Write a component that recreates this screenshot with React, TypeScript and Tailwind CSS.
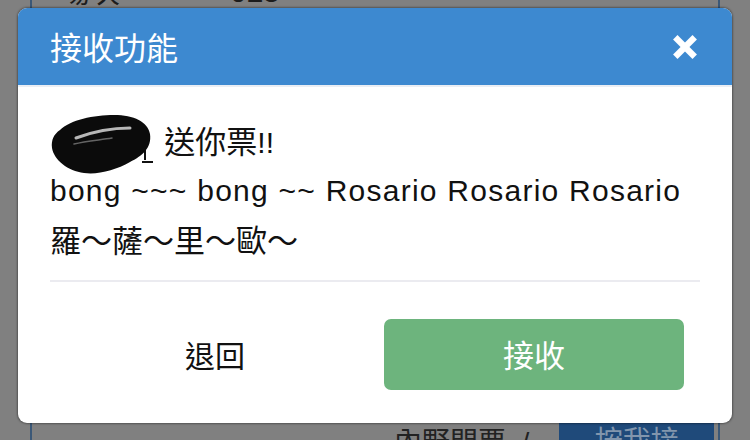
import { X } from 'lucide-react';

const latin = "font-['Liberation_Sans','Noto_Sans_CJK_TC',sans-serif]";

function Scribble() {
  // redacted name, drawn as a marker blob
  return (
    <svg width="108" height="62" viewBox="0 0 108 62" className="inline-block align-middle -my-[14px] -mr-[2px]">
      <path d="M92 48 H103" stroke="#111" strokeWidth="2" />
      <path d="M95 34 V46" stroke="#111" strokeWidth="2" />
      <path
        d="M10 16 C20 6 44 1 64 1 C84 1 98 8 100 20 C102 34 92 42 80 48 C66 56 48 61 34 59 C18 57 4 46 2 34 C1 26 4 20 10 16 Z"
        fill="#0b0b0b"
      />
      <path d="M26 24 C42 18 62 14 80 14" stroke="#f2f2f2" strokeWidth="3" fill="none" strokeLinecap="round" opacity="0.75" />
      <path d="M24 30 C36 27 50 26 62 24" stroke="#bdbdbd" strokeWidth="1.5" fill="none" strokeLinecap="round" opacity="0.5" />
    </svg>
  );
}

export default function App() {
  return (
    <div className={`relative w-[750px] h-[440px] overflow-hidden bg-[#808080] ${latin}`}>
      {/* page behind the modal */}
      <div className="mx-[30px] w-[690px] h-full flex flex-col justify-between border-x-2 border-[#3b5877]">
        <div className="flex items-end gap-[110px] pl-[28px] -mt-[24px] text-[30px] leading-[32px] text-[#1c1c1c]">
          <span>場次</span>
          <span>025</span>
        </div>
        <div className="flex items-start -mb-[24px]">
          <span className="ml-[362px] mt-[4px] text-[28px] leading-[34px] text-[#222]">內野門票 &nbsp;/</span>
          <div className="ml-[30px] w-[155px] h-[42px] bg-[#1f4a7a] flex justify-center pt-[3px] text-[28px] leading-[34px] text-[#8296ad]">
            按我接
          </div>
        </div>
      </div>

      {/* modal */}
      <div className="absolute left-[18px] top-[8px] w-[714px] h-[415px] bg-white rounded-[9px] overflow-hidden shadow-[0_0_2px_1px_rgba(0,0,0,0.35)] flex flex-col">
        <div className="h-[79px] shrink-0 bg-[#3d89d0] flex items-center justify-between pl-[32px] pr-[35px] border-b-[2px] border-[#eaeef4]">
          <h2 className="text-[32px] leading-none text-white font-['Noto_Sans_CJK_TC',sans-serif] pb-[2px]">接收功能</h2>
          <X className="w-[30px] h-[30px] text-white -mr-[3px]" strokeWidth={5} strokeLinecap="square" />
        </div>

        <div className="px-[32px] pt-[29px] text-[30px] leading-[48px] text-[#111]">
          <p>
            <Scribble /> <span className="font-['Noto_Sans_CJK_TC',sans-serif] text-[31px]">送你票</span>!!
          </p>
          <p className="tracking-[1.25px]">bong ~~~ bong ~~ Rosario Rosario Rosario</p>
          <p className="font-['Noto_Sans_CJK_TC',sans-serif] text-[31px]">羅～薩～里～歐～</p>
          <div className="mt-[17px] h-[2px] bg-[#ebebf0]" />
        </div>

        <div className="flex items-center px-[32px] pt-[37px]">
          <button className="w-[330px] h-[71px] text-[30px] text-[#111] font-['Noto_Sans_CJK_TC',sans-serif]">退回</button>
          <button className="ml-[4px] w-[300px] h-[71px] rounded-[7px] bg-[#6db47d] text-[31px] text-white font-['Noto_Sans_CJK_TC',sans-serif]">
            接收
          </button>
        </div>
      </div>
    </div>
  );
}
